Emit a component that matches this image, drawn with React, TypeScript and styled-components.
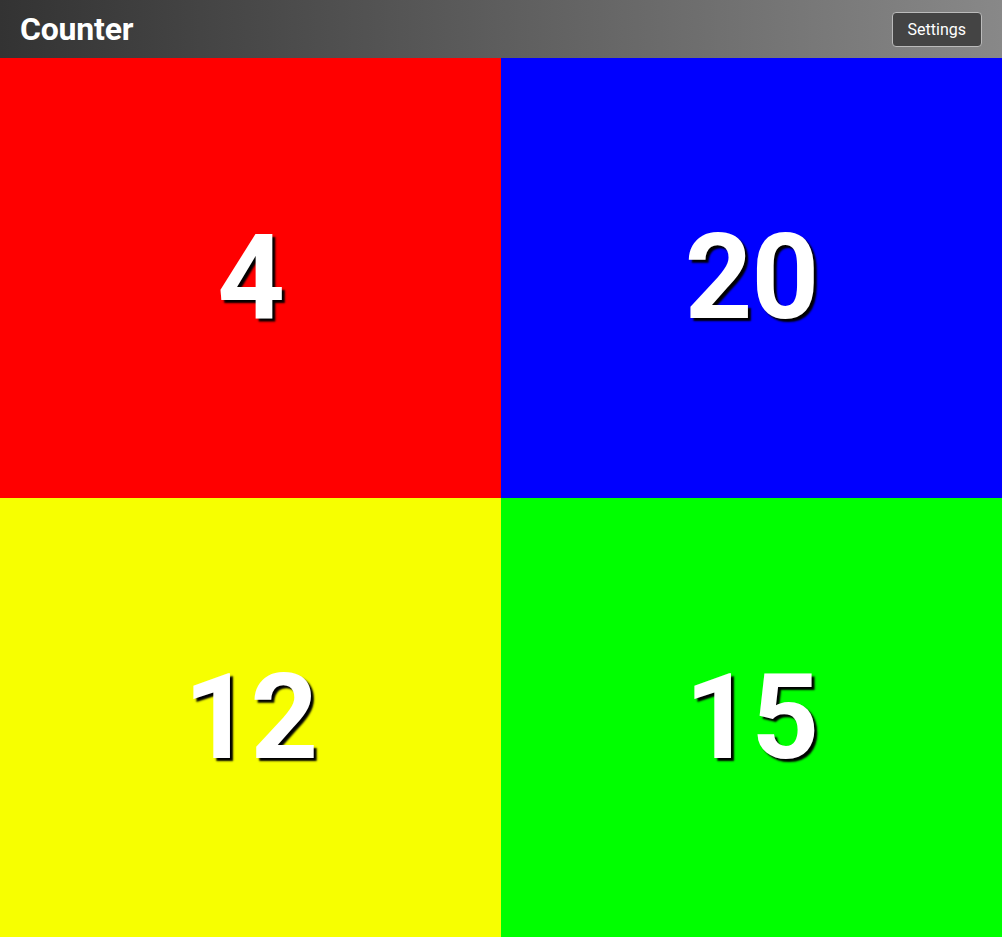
import React from "react";
import styled, { createGlobalStyle } from "styled-components";

const Global = createGlobalStyle`
  html, body { margin: 0; padding: 0; height: 100%; }
  body { font-family: Roboto, "Liberation Sans", sans-serif; overflow: hidden; }
  #root { height: 100%; }
`;

const Page = styled.div`
  height: 100vh;
  display: flex;
  flex-direction: column;
`;

const Header = styled.header`
  height: 58px;
  flex: 0 0 58px;
  display: flex;
  align-items: center;
  justify-content: space-between;
  padding: 0 20px;
  box-sizing: border-box;
  background: linear-gradient(to right, #333333, #888888);
`;

const Title = styled.h1`
  margin: 0;
  color: #ffffff;
  font-family: Roboto, "Liberation Sans", sans-serif;
  font-weight: 700;
  font-size: 32px;
  letter-spacing: -0.2px;
`;

const SettingsButton = styled.button`
  height: 35px;
  padding: 0 15px;
  background: #444444;
  color: #ffffff;
  border: 1px solid #bbbbbb;
  border-radius: 4px;
  font-family: Roboto, "Liberation Sans", sans-serif;
  font-size: 16px;
  cursor: pointer;
`;

const Grid = styled.main`
  flex: 1;
  display: grid;
  grid-template-columns: 501px 1fr;
  grid-template-rows: 440px 1fr;
`;

const Cell = styled.div<{ $bg: string }>`
  background: ${(p) => p.$bg};
  display: flex;
  align-items: center;
  justify-content: center;
`;

const Count = styled.span`
  color: #ffffff;
  font-family: Roboto, "Liberation Sans", sans-serif;
  font-weight: 700;
  font-size: 118px;
  letter-spacing: -1px;
  line-height: 1;
  text-shadow: 3px 3px 2px #000000;
`;

const counters = [
  { bg: "#ff0000", value: 4 },
  { bg: "#0000ff", value: 20 },
  { bg: "#f7ff00", value: 12 },
  { bg: "#00ff00", value: 15 },
];

export default function App() {
  return (
    <>
      <Global />
      <Page>
        <Header>
          <Title>Counter</Title>
          <SettingsButton>Settings</SettingsButton>
        </Header>
        <Grid>
          {counters.map((c) => (
            <Cell key={c.bg} $bg={c.bg}>
              <Count>{c.value}</Count>
            </Cell>
          ))}
        </Grid>
      </Page>
    </>
  );
}
